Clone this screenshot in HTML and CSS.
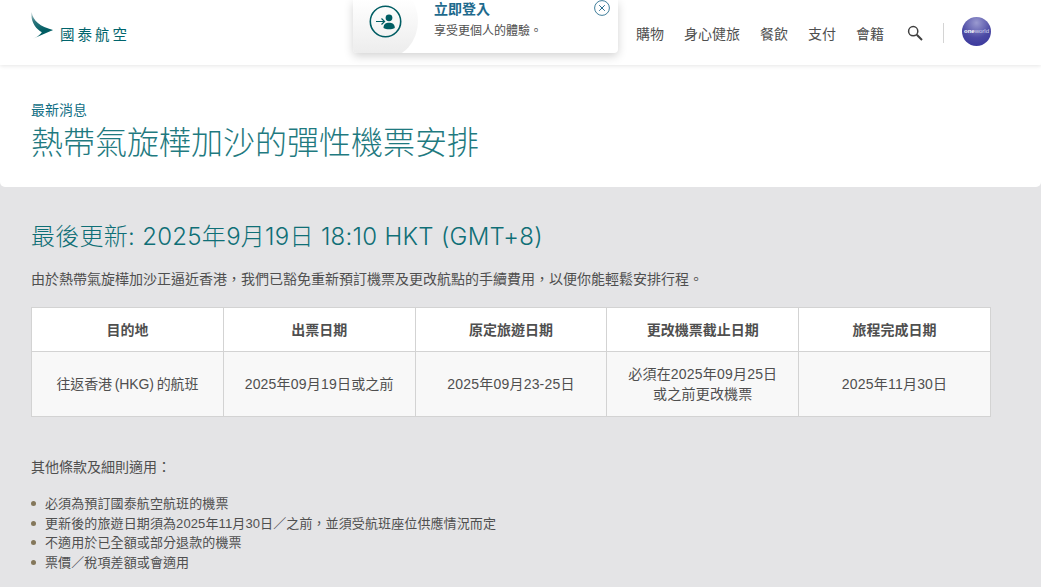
FILE: index.html
```html
<!DOCTYPE html>
<html lang="zh-Hant">
<head>
    <meta charset="UTF-8">
    <meta name="viewport" content="width=device-width, initial-scale=1.0">
    <title>熱帶氣旋樺加沙的彈性機票安排</title>
    <link rel="stylesheet" href="styles.css">
</head>
<body>
    <!-- Top section: header and page title -->
    <div class="top">
        <header class="header">
            <a class="logo" href="#">
                <svg class="logo-mark" width="23" height="28" viewBox="0 0 23 28">
                    <defs>
                        <linearGradient id="wing" x1="0" y1="0" x2="0.25" y2="1">
                            <stop offset="0" stop-color="#c9d8da"/>
                            <stop offset="0.45" stop-color="#2f777e"/>
                            <stop offset="1" stop-color="#005d63"/>
                        </linearGradient>
                    </defs>
                    <path d="M0.6 0 C2 9 9 14.5 22 18 L11.5 20.5 C4.5 17 -0.6 9 0.6 0 Z" fill="url(#wing)"/>
                    <path d="M22 18 L2.5 26.5 C7 24.5 10.5 22 11.5 18.5 Z" fill="#005d63"/>
                </svg>
                <span class="logo-text">國泰航空</span>
            </a>
            <nav class="nav">
                <a href="#">購物</a>
                <a href="#">身心健旅</a>
                <a href="#">餐飲</a>
                <a href="#">支付</a>
                <a href="#">會籍</a>
            </nav>
            <svg class="search" width="16" height="16" viewBox="0 0 16 16" fill="none" stroke="#3f3f3f">
                <circle cx="6.2" cy="6.2" r="4.6" stroke-width="1.5"/>
                <path d="M9.8 9.8 L15 15" stroke-width="2"/>
            </svg>
            <span class="divider"></span>
            <div class="oneworld"><span>one</span>world</div>
        </header>

        <div class="login-popup">
            <div class="login-icon">
                <svg width="33" height="33" viewBox="0 0 33 33" fill="none">
                    <circle cx="16.5" cy="16.5" r="15.2" stroke="#005d63" stroke-width="1.6"/>
                    <path d="M7 16.5 H15 M12.5 13.5 L15.6 16.5 L12.5 19.5" stroke="#005d63" stroke-width="1.2"/>
                    <circle cx="20" cy="12.8" r="3.4" fill="#005d63"/>
                    <path d="M14.5 23 C14.5 19 17 17.8 20 17.8 C23 17.8 25.8 19 25.8 23 C23 24.8 17 24.8 14.5 23 Z" fill="#005d63"/>
                </svg>
            </div>
            <div class="login-text">
                <div class="login-title">立即登入</div>
                <div class="login-sub">享受更個人的體驗。</div>
            </div>
            <svg class="login-close" width="16" height="16" viewBox="0 0 16 16" fill="none" stroke="#2a6f8f">
                <circle cx="8" cy="8" r="7.4" stroke-width="0.9"/>
                <path d="M5.2 5.2 L10.8 10.8 M10.8 5.2 L5.2 10.8" stroke-width="1"/>
            </svg>
        </div>

        <div class="title-block">
            <div class="eyebrow">最新消息</div>
            <h1>熱帶氣旋樺加沙的彈性機票安排</h1>
        </div>
    </div>

    <!-- Main content -->
    <main class="content">
        <h2>最後更新: 2025年9月19日 18:10 HKT (GMT+8)</h2>
        <p class="intro">由於熱帶氣旋樺加沙正逼近香港，我們已豁免重新預訂機票及更改航點的手續費用，以便你能輕鬆安排行程。</p>

        <table class="dates">
            <thead>
                <tr>
                    <th>目的地</th>
                    <th>出票日期</th>
                    <th>原定旅遊日期</th>
                    <th>更改機票截止日期</th>
                    <th>旅程完成日期</th>
                </tr>
            </thead>
            <tbody>
                <tr>
                    <td class="dest">往返香港 (HKG) 的航班</td>
                    <td>2025年09月19日或之前</td>
                    <td>2025年09月23-25日</td>
                    <td>必須在2025年09月25日<br>或之前更改機票</td>
                    <td>2025年11月30日</td>
                </tr>
            </tbody>
        </table>

        <p class="terms">其他條款及細則適用：</p>
        <ul class="terms-list">
            <li>必須為預訂國泰航空航班的機票</li>
            <li>更新後的旅遊日期須為2025年11月30日／之前，並須受航班座位供應情況而定</li>
            <li>不適用於已全額或部分退款的機票</li>
            <li>票價／稅項差額或會適用</li>
        </ul>
    </main>
</body>
</html>
```

FILE: styles.css
```css
* {
    box-sizing: border-box;
}

html, body {
    height: 587px;
    overflow: hidden;
}

body {
    margin: 0;
    background-color: #e4e4e6;
    color: #4f4f4f;
    font-family: "Liberation Sans", Arial, "Noto Sans CJK TC", sans-serif;
    font-size: 14px;
}

a {
    color: inherit;
    text-decoration: none;
}

.top {
    position: relative;
    background: #fff;
    border-radius: 0 0 5px 5px;
}

.header {
    display: flex;
    align-items: center;
    height: 65px;
    padding: 0 50px 0 31px;
    box-shadow: 0 1px 4px rgba(0,0,0,0.1);
}

.logo {
    display: flex;
    align-items: flex-start;
    gap: 6px;
    margin-top: -10px;
}

.logo-text {
    margin-top: 11px;
    color: #00646c;
    font-size: 14.5px;
    letter-spacing: 3px;
}

.nav {
    display: flex;
    gap: 20px;
    margin-left: auto;
    margin-top: 1px;
}

.search {
    margin-left: 23px;
    margin-top: 1px;
}

.divider {
    width: 1px;
    height: 20px;
    margin-left: 20px;
    background: #d4d4d4;
}

.oneworld {
    display: flex;
    align-items: center;
    justify-content: center;
    width: 29px;
    height: 29px;
    margin-left: 18px;
    margin-top: -3px;
    border-radius: 50%;
    background: radial-gradient(circle at 50% 20%, #9a9ad0 0%, #4c4aa4 55%, #34329a 100%);
    color: #d4d4ec;
    font-size: 6px;
}

.oneworld span {
    color: #fff;
    font-weight: bold;
}

.login-popup {
    position: absolute;
    top: 0;
    left: 353px;
    display: flex;
    width: 265px;
    height: 53px;
    background: #fff;
    border-radius: 0 0 4px 4px;
    box-shadow: 0 3px 10px rgba(0,0,0,0.18);
    overflow: hidden;
}

.login-icon {
    display: flex;
    flex-shrink: 0;
    align-items: center;
    justify-content: center;
    width: 65px;
    height: 74px;
    margin-top: -16px;
    background: linear-gradient(180deg, #fff 20%, #ebebeb 100%);
    border-radius: 0 50% 50% 0 / 0 50% 50% 0;
}

.login-text {
    margin-left: 16px;
}

.login-title {
    color: #1e6a8d;
    font-size: 14px;
    font-weight: bold;
    line-height: 18px;
}

.login-sub {
    margin-top: 5px;
    font-size: 12px;
    line-height: 16px;
}

.login-close {
    position: absolute;
    top: 0;
    right: 8px;
}

.title-block {
    height: 122px;
    padding: 36px 31px 0;
}

.eyebrow {
    color: #0f6e84;
    font-size: 14px;
    line-height: 18px;
}

h1 {
    margin: 5px 0 0;
    color: #1f7a80;
    font-size: 32px;
    font-weight: 300;
    line-height: 38px;
}

.content {
    padding: 34px 50px 0 31px;
}

h2 {
    margin: 0;
    color: #0f6f76;
    font-family: "Inter", "Noto Sans CJK TC", sans-serif;
    font-size: 24px;
    font-weight: 300;
    letter-spacing: 0.28px;
    line-height: 32px;
}

.intro {
    margin: 16px 0 0;
    line-height: 20px;
}

.dates {
    width: 960px;
    margin-top: 18px;
    table-layout: fixed;
    border-collapse: collapse;
    text-align: center;
}

.dates th, .dates td {
    border: 1px solid #d3d3d3;
    line-height: 20px;
}

.dates th {
    height: 44px;
    background: #fff;
    font-weight: bold;
}

.dates td {
    height: 65px;
    background: #f8f8f8;
    letter-spacing: 0.2px;
}

.dates td.dest {
    letter-spacing: -0.1px;
    word-spacing: -1px;
}

.terms {
    margin: 40px 0 0;
    line-height: 20px;
}

.terms-list {
    margin: 17px 0 0;
    padding: 0 0 0 14px;
    font-size: 13px;
    letter-spacing: 0.11px;
    line-height: 19.5px;
    list-style: none;
}

.terms-list li::before {
    content: "";
    display: inline-block;
    width: 5px;
    height: 5px;
    margin-left: -14px;
    margin-right: 9px;
    vertical-align: 2px;
    border-radius: 50%;
    background: #84775b;
}
```
